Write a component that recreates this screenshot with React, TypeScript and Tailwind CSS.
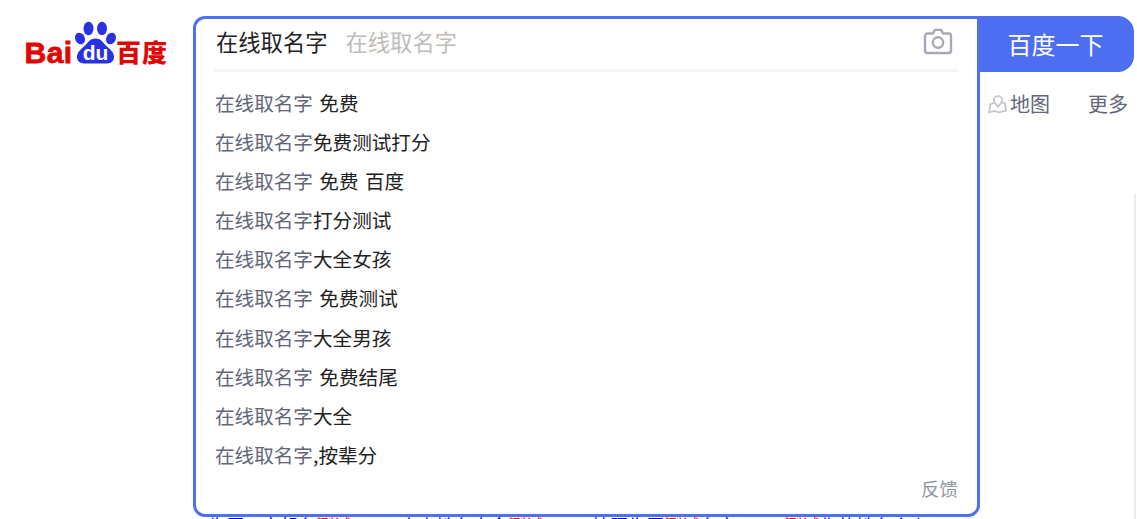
const cjk = "font-['Noto_Sans_CJK_SC','Liberation_Sans',sans-serif]";

const suggestions: { typed: string; rest: string }[] = [
  { typed: "在线取名字", rest: " 免费" },
  { typed: "在线取名字", rest: "免费测试打分" },
  { typed: "在线取名字", rest: " 免费 百度" },
  { typed: "在线取名字", rest: "打分测试" },
  { typed: "在线取名字", rest: "大全女孩" },
  { typed: "在线取名字", rest: " 免费测试" },
  { typed: "在线取名字", rest: "大全男孩" },
  { typed: "在线取名字", rest: " 免费结尾" },
  { typed: "在线取名字", rest: "大全" },
  { typed: "在线取名字", rest: ",按辈分" },
];

function BaiduLogo() {
  return (
    <svg width="146" height="56" viewBox="0 0 146 56" className="mt-[5px] ml-[24px] mb-[-6px] shrink-0">
      <text
        x="0.500"
        y="42"
        fontFamily="Liberation Sans"
        fontWeight="700"
        fontSize="30"
        fill="#e10602"
        stroke="#e10602"
        strokeWidth="0.8"
        letterSpacing="0.5"
      >
        Bai
      </text>
      <ellipse cx="64.500" cy="7.500" rx="5" ry="6.800" fill="#2932e1" />
      <ellipse cx="78" cy="7.500" rx="5" ry="6.800" fill="#2932e1" />
      <ellipse cx="56" cy="17.500" rx="4.800" ry="6" fill="#2932e1" transform="rotate(-25 56 17.500)" />
      <ellipse cx="87" cy="17.500" rx="4.800" ry="6" fill="#2932e1" transform="rotate(25 87 17.500)" />
      <path
        d="M71.500 17.500c-6 0-7.500 4.500-11.500 8c-4 3.500-7 6-7 10.500c0 4.500 3.500 6.500 8 6.500h21c4.500 0 8-2 8-6.500c0-4.500-3-7-7-10.500c-4-3.500-5.500-8-11.500-8z"
        fill="#2932e1"
      />
      <text x="71.500" y="38.500" textAnchor="middle" fontFamily="Liberation Sans" fontWeight="700" fontSize="21" fill="#fff">
        du
      </text>
      <text x="92" y="41" fontFamily="Noto Sans CJK SC" fontWeight="900" fontSize="25" fill="#e10602" letterSpacing="1">
        百度
      </text>
    </svg>
  );
}

export default function App() {
  return (
    <div className={`relative h-[519px] w-[1137px] overflow-hidden bg-white ${cjk}`}>
      <div className="flex items-start pt-[16px]">
        <BaiduLogo />
        <div className="ml-[23px] h-[56px] w-[784px]" />
        <button className="h-[56px] w-[157px] rounded-r-[16px] bg-[#4e6ef2] text-center text-[24px] leading-[56px] text-white">
          百度一下
        </button>
      </div>

      <div className="mt-[17px] flex items-center justify-end pr-[9px] text-[20px] leading-[30px] text-[#626675]">
        <span className="flex items-center">
          <svg width="20" height="19" viewBox="0 0 20 19" fill="none" stroke="#c4c7ce" strokeWidth="1.800">
            <path d="M10 1.200c-2.400 0-4.200 1.800-4.200 4c0 1.900 1.500 3.600 4.200 6.300c2.700-2.700 4.200-4.400 4.200-6.300c0-2.200-1.800-4-4.200-4z" />
            <path d="M5.800 8l-3.400 1.200l-1.300 8.100l5.400-1.400l4 1.500l7.500-1.500l-1.200-7.800l-2.800-.6" />
          </svg>
          <span className="ml-[2px]">地图</span>
        </span>
        <span className="ml-[38px]">更多</span>
      </div>

      {/* results behind the open dropdown, only the tops of the last line peek out */}
      <div className="ml-[208px] mt-[391px] flex gap-[48px] whitespace-nowrap text-[18px] leading-[30px] text-[#0000e6]">
        <span>
          生辰八字起名<span className="text-[#f00]">测试</span>
        </span>
        <span>
          宝宝姓名大全<span className="text-[#f00]">测试</span>
        </span>
        <span>
          按照生辰<span className="text-[#f00]">测试</span>名字
        </span>
        <span>
          <span className="text-[#f00]">测试</span>你的姓名含义
        </span>
      </div>

      <div className="absolute left-[193px] top-[16px] h-[501px] w-[787px] rounded-[12px] rounded-tr-none border-[3px] border-[#4e71f2] bg-white">
        <div className="ml-[18px] mr-[20px] flex h-[53px] items-center border-b-[3px] border-[#f5f5f6] pb-[5px] pl-[2px]">
          <span className="text-[22.300px] leading-none text-[#222]">在线取名字</span>
          <span className="ml-[18px] text-[22.300px] leading-none text-[#c0bcb8]">在线取名字</span>
          <svg
            width="30"
            height="27"
            viewBox="0 0 30 27"
            fill="none"
            stroke="#a7aab5"
            strokeWidth="2.400"
            strokeLinejoin="round"
            className="ml-auto mr-[4px]"
          >
            <path d="M10 5.500l1.800-3.600h6.400l1.800 3.600h5.500a2.500 2.500 0 0 1 2.500 2.500v14.500a2.500 2.500 0 0 1-2.500 2.500h-21a2.500 2.500 0 0 1-2.500-2.500v-14.500a2.500 2.500 0 0 1 2.500-2.500z" />
            <circle cx="15" cy="14.500" r="5.200" />
          </svg>
        </div>
        <ul className="ml-[19px] mt-[11px]">
          {suggestions.map((item, index) => (
            <li key={index} className="whitespace-pre text-[19.600px] leading-[39.100px] text-[#222] [word-spacing:2px]">
              <span className="text-[#626675]">{item.typed}</span>
              {item.rest}
            </li>
          ))}
        </ul>
        <div className="absolute bottom-[14px] right-[19px] text-[18.500px] leading-[24px] text-[#9195a3]">反馈</div>
      </div>

      <div className="absolute right-[1px] top-[194px] h-[325px] w-[2px] bg-[#ebebeb]" />
    </div>
  );
}
